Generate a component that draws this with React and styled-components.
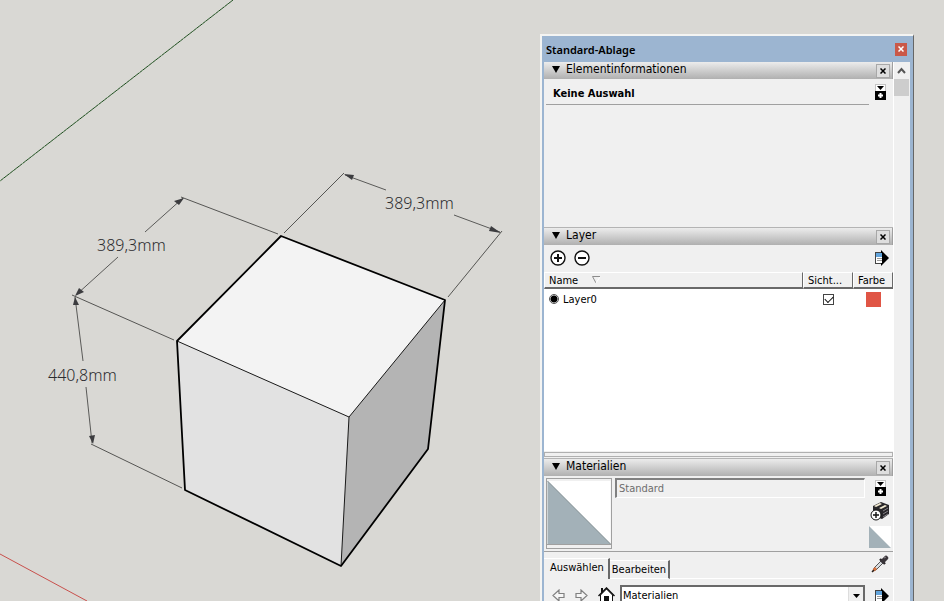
import React, { useState } from "react";
import styled, { createGlobalStyle, css } from "styled-components";

const dimensions = [
  { text: "389,3mm", x: 97, y: 251 },
  { text: "389,3mm", x: 385, y: 209 },
  { text: "440,8mm", x: 48, y: 381 },
];

const extensionLines = [
  "M181 197 L278 234",
  "M72 295 L174 340",
  "M91 444 L182 488",
  "M344 173 L284 233",
  "M502 231 L448 297",
];

const dimensionLines = [
  "M183 198 L145 232",
  "M118 257 L76 295",
  "M75 297 L83 361",
  "M86 387 L92 443",
  "M345 175 L386 190",
  "M454 215 L500 232",
];

const arrowHeads = [
  "M184 198 L179 205 L174 201 Z",
  "M75 296 L79 288 L84 292 Z",
  "M75 297 L73 305 L79 305 Z",
  "M93 444 L89 436 L95 435 Z",
  "M344 174 L354 175 L352 180 Z",
  "M501 233 L489 231 L491 226 Z",
];

const Model = () => (
  <Viewport>
    <Drawing width="541" height="601" role="img" aria-label="Quader mit Maßen">
      <path d="M0 181 L233 0" stroke="#1c4a1c" />
      <path d="M0 181 L233 0" stroke="#8fae8c" strokeDasharray="1 3" />
      <path d="M0 554 L87 601" stroke="#c8504c" />

      <path d="M281 236 L445 300 L349 417 L177 341 Z" fill="#f3f3f3" />
      <path d="M177 341 L349 417 L341 566 L185 490 Z" fill="#e2e2e2" />
      <path d="M349 417 L445 300 L428 449 L341 566 Z" fill="#b4b4b4" />
      <path d="M177 341 L349 417 L445 300 M349 417 L341 566" stroke="#1a1a1a" fill="none" />
      <path
        d="M177 341 L281 236 L445 300 L428 449 L341 566 L185 490 Z"
        stroke="#000"
        strokeWidth="1.8"
        strokeLinejoin="round"
        fill="none"
      />

      {extensionLines.map((d) => (
        <path key={d} d={d} stroke="#555553" />
      ))}
      {dimensionLines.map((d) => (
        <path key={d} d={d} stroke="#5a5a58" />
      ))}
      {arrowHeads.map((d) => (
        <path key={d} d={d} fill="#3c3c3f" />
      ))}
      {dimensions.map(({ text, x, y }) => (
        <Dimension key={y} x={x} y={y}>
          {text}
        </Dimension>
      ))}
    </Drawing>
  </Viewport>
);

const CloseIcon = () => (
  <svg width="6" height="6" viewBox="0 0 6 6">
    <path d="M0.5 0.5 L5.5 5.5 M5.5 0.5 L0.5 5.5" stroke="currentColor" strokeWidth="1.5" />
  </svg>
);

const ExpandIcon = () => (
  <svg width="11" height="16" viewBox="0 0 11 16">
    <rect width="11" height="16" fill="#c4c4c4" />
    <rect x="1" y="1" width="9" height="6" fill="#fff" />
    <path d="M2 2 H9 L5.5 6 Z" />
    <rect y="7" width="11" height="9" />
    <path d="M4.5 9 h2 v1.5 h1.5 v2 h-1.5 v1.5 h-2 v-1.5 h-1.5 v-2 h1.5 Z" fill="#fff" />
  </svg>
);

const DetailsIcon = () => (
  <svg width="14" height="16" viewBox="0 0 14 16">
    <rect x="0.5" y="2.5" width="7" height="11" fill="#fff" stroke="#444" />
    <rect x="1" y="3" width="6" height="4" fill="#62a4dc" />
    <path d="M2 8.5 H7 M2 10.5 H7" stroke="#999" />
    <path d="M6 0 L14 8 L6 16 V13 H7 V3 H6 Z" />
  </svg>
);

const RoundIcon = ({ plus }) => (
  <svg width="16" height="16" viewBox="0 0 16 16">
    <circle cx="8" cy="8" r="7" fill="#fff" stroke="#111" strokeWidth="1.4" />
    <path d={plus ? "M8 4 V12 M4 8 H12" : "M4 8 H12"} stroke="#111" strokeWidth="2" />
  </svg>
);

const BoxIcon = () => (
  <svg width="20" height="20" viewBox="0 0 20 20">
    <path d="M3 5 L11 1 L19 4 V13 L12 18 L3 15 Z" fill="#28262a" />
    <path d="M4 5 L10 2 L12 3 L6 6 Z M9 7 L15 4 L17 5 L11 8 Z" fill="#f2ead2" />
    <path d="M13 10 L18 7 M13 13 L18 10 M13 16 L18 13" stroke="#858287" />
    <circle cx="6" cy="14" r="5" fill="#fff" stroke="#111" />
    <path d="M6 11 V17 M3 14 H9" stroke="#111" strokeWidth="1.4" />
  </svg>
);

const DropperIcon = () => (
  <svg width="18" height="18" viewBox="0 0 18 18">
    <path d="M10 6 L12 8 L5 15 L3 15 L3 13 Z" fill="#d9dde0" stroke="#555" />
    <path d="M4 12 L6 14 L4 16 L1 17 L2 14 Z" fill="#d8713c" />
    <path d="M1 17 L3 15" stroke="#222" strokeWidth="1.5" />
    <path d="M9 4 L14 9" stroke="#2b272b" strokeWidth="2.4" />
    <path d="M12 6 L15 3" stroke="#3a353a" strokeWidth="4.5" strokeLinecap="round" />
    <path d="M13 3 L15 2" stroke="#8a858a" />
  </svg>
);

const NavArrow = ({ forward }) => (
  <svg width="13" height="13" viewBox="0 0 13 13">
    <path
      d={forward ? "M1 4.5 H6 V1 L12 6.5 L6 12 V8.5 H1 Z" : "M12 4.5 H7 V1 L1 6.5 L7 12 V8.5 H12 Z"}
      fill="#f6f6f6"
      stroke="#808080"
      strokeWidth="1.2"
    />
  </svg>
);

const HomeIcon = () => (
  <svg width="17" height="17" viewBox="0 0 17 17">
    <path d="M2.5 8 V16.5 H14.5 V8 L8.5 2 Z" fill="#fff" stroke="#111" />
    <path d="M0.5 9 L8.5 1 L16.5 9" fill="none" stroke="#111" strokeWidth="1.5" />
    <path d="M3 1 H5 V5 L3 7 Z" fill="#111" />
    <rect x="6" y="9" width="5" height="8" fill="#111" />
  </svg>
);

const MaterialSwatch = ({ size, edge }) => (
  <svg width={size} height={size} viewBox="0 0 66 66">
    <rect width="66" height="66" fill="#fff" />
    <path d="M0 0 L66 66 H0 Z" fill="#a3b1b8" />
    {edge && <path d="M0 0 L66 66" stroke="#7d888d" />}
  </svg>
);

const Section = ({ title, children }) => {
  const [open, setOpen] = useState(true);

  return (
    <Panel>
      <SectionHeader>
        <SectionTitle type="button" aria-expanded={open} onClick={() => setOpen(!open)}>
          <svg width="8" height="7" viewBox="0 0 8 7">
            <path d={open ? "M0 0 H8 L4 7 Z" : "M0 0 L7 4 L0 7 Z"} />
          </svg>
          {title}
        </SectionTitle>
        <SectionClose type="button" aria-label={`${title} schließen`}>
          <CloseIcon />
        </SectionClose>
      </SectionHeader>
      {open && children}
    </Panel>
  );
};

const ElementInfo = () => (
  <InfoBody>
    <Selection>Keine Auswahl</Selection>
    <IconButton type="button" aria-label="Details">
      <ExpandIcon />
    </IconButton>
  </InfoBody>
);

const Layers = () => {
  const [visible, setVisible] = useState(true);

  return (
    <>
      <LayerToolbar>
        <IconButton type="button" aria-label="Layer hinzufügen">
          <RoundIcon plus />
        </IconButton>
        <IconButton type="button" aria-label="Layer löschen">
          <RoundIcon />
        </IconButton>
        <Spacer />
        <IconButton type="button" aria-label="Layer-Details">
          <DetailsIcon />
        </IconButton>
      </LayerToolbar>
      <LayerList>
        <LayerTable>
          <thead>
            <tr>
              <Th>
                Name
                <SortMark width="9" height="8" viewBox="0 0 9 8">
                  <path d="M8 0.5 H0.5 L4 7" fill="none" stroke="#8c8c8c" />
                  <path d="M8 1 L4 7" stroke="#fff" />
                </SortMark>
              </Th>
              <Th $width={50}>Sicht...</Th>
              <Th $width={40}>Farbe</Th>
            </tr>
          </thead>
          <tbody>
            <tr>
              <Td>
                <LayerLabel>
                  <Radio name="layer" defaultChecked />
                  Layer0
                </LayerLabel>
              </Td>
              <Td $center>
                <Checkbox
                  aria-label="Layer0 sichtbar"
                  checked={visible}
                  onChange={() => setVisible(!visible)}
                />
              </Td>
              <Td $center>
                <ColorButton type="button" aria-label="Farbe von Layer0" />
              </Td>
            </tr>
          </tbody>
        </LayerTable>
      </LayerList>
      <Splitter />
    </>
  );
};

const Materials = () => (
  <>
    <MaterialTop>
      <Preview>
        <MaterialSwatch size={64} edge />
      </Preview>
      <MaterialName aria-label="Materialname" defaultValue="Standard" disabled />
      <MaterialTools>
        <IconButton type="button" aria-label="Sekundäre Auswahl">
          <ExpandIcon />
        </IconButton>
        <IconButton type="button" aria-label="Material erstellen">
          <BoxIcon />
        </IconButton>
        <IconButton type="button" aria-label="Standardmaterial">
          <MaterialSwatch size={22} />
        </IconButton>
      </MaterialTools>
    </MaterialTop>
    <Tabs role="tablist">
      <Tab type="button" role="tab" aria-selected="true" $active>
        Auswählen
      </Tab>
      <Tab type="button" role="tab" aria-selected="false">
        Bearbeiten
      </Tab>
      <TabRest>
        <IconButton type="button" aria-label="Probe entnehmen">
          <DropperIcon />
        </IconButton>
      </TabRest>
    </Tabs>
    <NavBar>
      <NavButtons>
        <IconButton type="button" aria-label="Zurück">
          <NavArrow />
        </IconButton>
        <IconButton type="button" aria-label="Vorwärts">
          <NavArrow forward />
        </IconButton>
        <IconButton type="button" aria-label="Im Modell">
          <HomeIcon />
        </IconButton>
      </NavButtons>
      <SelectBox>
        <Select aria-label="Bibliothek" defaultValue="Materialien">
          <option>Materialien</option>
        </Select>
        <SelectArrow>
          <svg width="7" height="4" viewBox="0 0 7 4">
            <path d="M0 0 H7 L3.5 4 Z" />
          </svg>
        </SelectArrow>
      </SelectBox>
      <IconButton type="button" aria-label="Details">
        <DetailsIcon />
      </IconButton>
    </NavBar>
  </>
);

const App = () => {
  return (
    <>
      <GlobalStyle />
      <Workspace>
        <Model />
        <Tray>
          <TitleBar>
            <h1>Standard-Ablage</h1>
            <TrayClose type="button" aria-label="Ablage schließen">
              <CloseIcon />
            </TrayClose>
          </TitleBar>
          <TrayContent>
            <Panels>
              <Section title="Elementinformationen">
                <ElementInfo />
              </Section>
              <Section title="Layer">
                <Layers />
              </Section>
              <Section title="Materialien">
                <Materials />
              </Section>
            </Panels>
            <ScrollTrack>
              <ScrollUp type="button" aria-label="Nach oben">
                <svg width="9" height="7" viewBox="0 0 9 7">
                  <path d="M1 6 L4.5 2 L8 6" fill="none" stroke="#555" strokeWidth="2" />
                </svg>
              </ScrollUp>
              <ScrollThumb />
            </ScrollTrack>
          </TrayContent>
        </Tray>
      </Workspace>
    </>
  );
};

export default App;

const GlobalStyle = createGlobalStyle`
  * {
    box-sizing: border-box;
  }
  body {
    margin: 0;
    overflow: hidden;
    background: #d9d8d4;
    color: #000;
    font-family: "DejaVu Sans Condensed", "DejaVu Sans", sans-serif;
    font-size: 11px;
  }
  button,
  input,
  select {
    margin: 0;
    padding: 0;
    font: inherit;
    color: inherit;
  }
  svg {
    display: block;
    flex: none;
  }
`;

const Workspace = styled.main`
  display: flex;
  height: 100vh;
  overflow: hidden;
`;

const Viewport = styled.div`
  flex: 1;
  min-width: 0;
  overflow: hidden;
`;

const Drawing = styled.svg`
  font-family: "Noto Sans", "Open Sans", sans-serif;
`;

const Dimension = styled.text`
  font-size: 16px;
  font-weight: 300;
  fill: #2c2c2f;
`;

const Tray = styled.aside`
  display: flex;
  flex-direction: column;
  width: 374px;
  margin: 34px 30px 0 0;
  border: 2px solid #f4f4f2;
  border-right: 1px solid #666;
  border-bottom: 0;
  background: #9cb5d1;
  padding: 0 3px 0 2px;
`;

const TitleBar = styled.header`
  display: flex;
  align-items: center;
  justify-content: space-between;
  height: 26px;
  padding: 0 3px 0 2px;
  h1 {
    margin: 0;
    padding-top: 2px;
    font-family: "Noto Sans", "Open Sans", sans-serif;
    font-size: 11px;
    font-weight: 600;
    line-height: 24px;
  }
`;

const buttonReset = css`
  display: flex;
  align-items: center;
  justify-content: center;
  border: 0;
  background: none;
`;

const TrayClose = styled.button`
  ${buttonReset}
  width: 12px;
  height: 13px;
  background: #ca5848;
  color: #fff;
`;

const TrayContent = styled.div`
  display: flex;
  flex: 1;
  min-height: 0;
  background: #f0f0f0;
`;

const Panels = styled.div`
  flex: 1;
  min-width: 0;
  overflow: hidden;
  border-right: 1px solid #fff;
`;

const ScrollTrack = styled.div`
  width: 16px;
  padding-right: 1px;
`;

const ScrollUp = styled.button`
  ${buttonReset}
  width: 100%;
  height: 17px;
`;

const ScrollThumb = styled.div`
  height: 17px;
  background: #cdcdcd;
`;

const Panel = styled.section`
  & + & {
    border-top: 1px solid #b4b4b4;
  }
`;

const SectionHeader = styled.div`
  display: flex;
  align-items: center;
  height: 17px;
  padding-right: 2px;
  border-right: 1px solid #a0a0a0;
  background: linear-gradient(#ececec, #b0b0b0);
`;

const SectionTitle = styled.button`
  ${buttonReset}
  flex: 1;
  justify-content: flex-start;
  gap: 6px;
  padding: 0 0 2px 8px;
  font-size: 12px;
  line-height: 15px;
`;

const SectionClose = styled.button`
  ${buttonReset}
  width: 14px;
  height: 14px;
  border: 1px solid #a8a8a8;
  background: #dedede;
`;

const IconButton = styled.button`
  ${buttonReset}
`;

const Spacer = styled.div`
  flex: 1;
`;

const InfoBody = styled.div`
  display: flex;
  align-items: flex-start;
  justify-content: space-between;
  min-height: 148px;
  padding: 5px 7px 0 2px;
`;

const Selection = styled.div`
  flex: 1;
  margin-right: 6px;
  padding: 0 7px;
  border-bottom: 1px solid #a0a0a0;
  font-weight: 700;
  line-height: 20px;
`;

const LayerToolbar = styled.div`
  display: flex;
  align-items: center;
  gap: 8px;
  height: 27px;
  padding: 0 4px 2px 6px;
`;

const LayerList = styled.div`
  min-height: 179px;
  background: #fff;
`;

const LayerTable = styled.table`
  width: 100%;
  table-layout: fixed;
  border-collapse: separate;
  border-spacing: 0;
`;

const Th = styled.th`
  width: ${({ $width }) => ($width ? `${$width}px` : "auto")};
  height: 17px;
  padding: 1px 0 0 4px;
  border: solid;
  border-width: 1px 1px 2px 1px;
  border-color: #fff #696969 #696969 #fff;
  background: #f0f0f0;
  font-weight: 400;
  line-height: 13px;
  text-align: left;
  white-space: nowrap;
`;

const SortMark = styled.svg`
  display: inline-block;
  margin-left: 14px;
`;

const Td = styled.td`
  height: 20px;
  padding: 0 5px;
  vertical-align: middle;
  text-align: ${({ $center }) => ($center ? "center" : "left")};
`;

const LayerLabel = styled.label`
  display: flex;
  align-items: center;
  gap: 4px;
`;

const Radio = styled.input.attrs({ type: "radio" })`
  appearance: none;
  width: 10px;
  height: 10px;
  border: 1px solid #555;
  border-radius: 50%;
  background: #fff;
  &:checked {
    background: radial-gradient(#000 0 3px, #fff 4px);
  }
`;

const Checkbox = styled.input.attrs({ type: "checkbox" })`
  display: block;
  appearance: none;
  width: 11px;
  height: 11px;
  margin: 0 auto;
  border: 1px solid #444;
  background: #fff;
  &:checked::before {
    content: "";
    display: block;
    width: 7px;
    height: 4px;
    margin: 1px;
    border: solid #111;
    border-width: 0 0 1px 1px;
    transform: rotate(-45deg);
  }
`;

const ColorButton = styled.button`
  display: block;
  width: 15px;
  height: 15px;
  margin: 0 auto;
  border: 0;
  background: #e05545;
`;

const Splitter = styled.div`
  height: 5px;
  margin: 1px 0;
  border: 1px solid #b0b0b0;
`;

const MaterialTop = styled.div`
  display: flex;
  align-items: flex-start;
  gap: 3px;
  padding: 2px 2px;
  border-bottom: 1px solid #a0a0a0;
`;

const Preview = styled.div`
  width: 66px;
  height: 71px;
  border: 1px solid #a0a0a0;
  svg {
    margin-top: 2px;
    border-bottom: 1px solid #a0a0a0;
  }
`;

const MaterialName = styled.input`
  flex: 1;
  min-width: 0;
  height: 20px;
  margin-right: 1px;
  padding: 0 3px 0 2px;
  border: 1px solid #fff;
  border-top: 2px solid #808080;
  border-left: 2px solid #808080;
  background: #f0f0f0;
  color: #6d6d6d;
`;

const MaterialTools = styled.div`
  display: flex;
  flex-direction: column;
  align-items: center;
  gap: 5px;
  padding-top: 2px;
`;

const Tabs = styled.div`
  display: flex;
  align-items: flex-end;
  height: 27px;
`;

const Tab = styled.button`
  height: ${({ $active }) => ($active ? "21px" : "19px")};
  padding: ${({ $active }) => ($active ? "0 4px 3px 6px" : "0 2px")};
  border: solid;
  border-width: 1px 2px ${({ $active }) => ($active ? "0" : "1px")} 0;
  border-color: #fff #696969 #fff #fff;
  background: #f0f0f0;
  white-space: nowrap;
`;

const TabRest = styled.div`
  display: flex;
  flex: 1;
  align-items: flex-start;
  justify-content: flex-end;
  height: 100%;
  padding: 3px 4px 0 0;
  border-bottom: 1px solid #fff;
`;

const NavBar = styled.div`
  display: flex;
  align-items: center;
  gap: 10px;
  padding: 6px 4px 0 8px;
`;

const NavButtons = styled.div`
  display: flex;
  align-items: center;
  gap: 10px;
`;

const SelectBox = styled.div`
  display: flex;
  flex: 1;
  min-width: 0;
  height: 21px;
  margin-left: -5px;
  border: 2px solid #696969;
  background: #fff;
`;

const Select = styled.select`
  flex: 1;
  min-width: 0;
  appearance: none;
  padding: 0 1px;
  border: 0;
  background: #fff;
`;

const SelectArrow = styled.span`
  display: flex;
  align-items: center;
  justify-content: center;
  width: 15px;
  border-left: 1px solid #ddd;
  background: #f0f0f0;
  pointer-events: none;
`;
